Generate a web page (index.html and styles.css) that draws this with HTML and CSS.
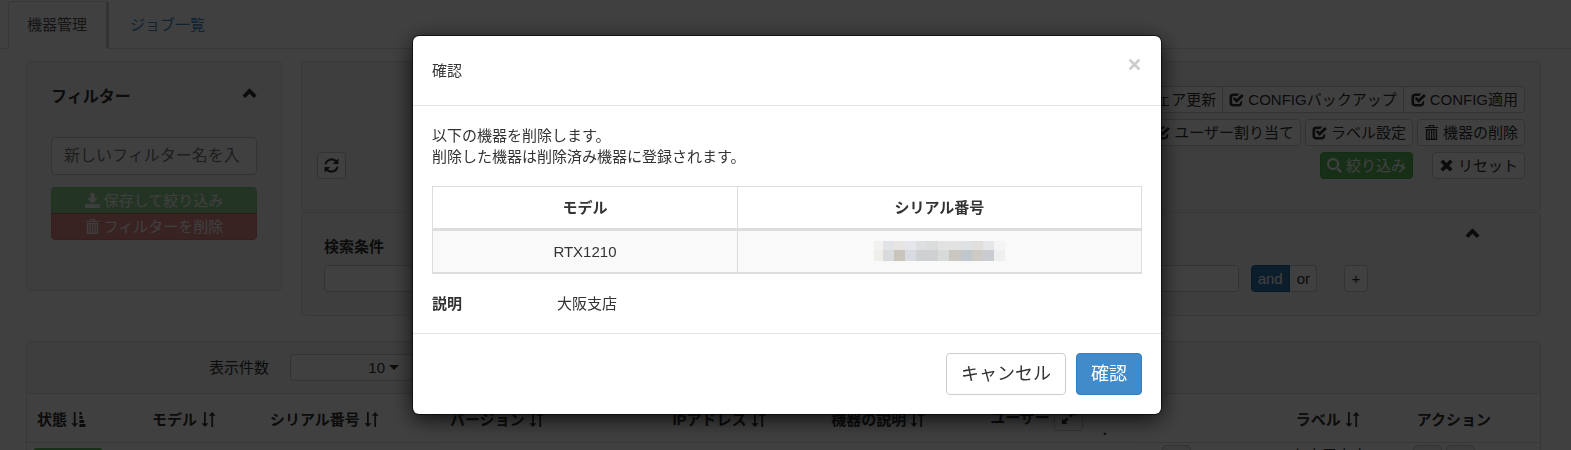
FILE: index.html
```html
<!DOCTYPE html>
<html lang="ja">
<head>
  <meta charset="UTF-8">
  <meta name="viewport" content="width=device-width, initial-scale=1.0">
  <title>機器管理</title>
  <link rel="stylesheet" href="styles.css">
</head>
<body>
  <svg class="sprite" aria-hidden="true">
    <symbol id="up" viewBox="0 0 16 16"><path d="M8 2.5 15.5 10 12.6 12.9 8 8.3 3.4 12.9.5 10z"/></symbol>
    <symbol id="check" viewBox="0 0 16 16"><path d="M11 1.500H4.500A4 4 0 0 0 .5 5.500v6A4 4 0 0 0 4.500 15.500H10a4 4 0 0 0 4-4V9l-2.300 2.200a1.500 1.500 0 0 1-1.500 1.700H5a1.700 1.700 0 0 1-1.700-1.700V6A1.700 1.700 0 0 1 5 4.300h4z"/><path d="M4 7.200 6 5.300l2.100 2.100L13.700 2l2.200 2.200-7.800 7.400z"/></symbol>
    <symbol id="save" viewBox="0 0 16 16"><path d="M6 0h4v5h4L8 11.500 2 5h4zM0 12h16v4H0zM12.500 13.300v1h2v-1z" fill-rule="evenodd"/></symbol>
    <symbol id="trash" viewBox="0 0 16 16"><path d="M5 2V0h6v2h4v1.200H1V2zM6.200 1.100V2h3.600v-.9zM2 4.200h12V16H2zM3.600 5.400v9.200h1.200V5.400zM6.200 5.400v9.200h1.200V5.400zM8.800 5.400v9.200H10V5.400zM11.300 5.400v9.200h1.200V5.400z" fill-rule="evenodd"/></symbol>
    <symbol id="refresh" viewBox="0 0 16 16"><path d="M.6 7A7.500 7.500 0 0 1 13.300 2.500L15.400.4V6.500H9.300L11.700 4.100A5.600 5.600 0 0 0 2.500 7zM15.400 9A7.500 7.500 0 0 1 2.700 13.500L.6 15.600V9.500H6.700L4.300 11.900A5.600 5.600 0 0 0 13.500 9z"/></symbol>
    <symbol id="search" viewBox="0 0 16 16"><path d="M6.500 0a6.500 6.500 0 1 1-3.700 11.800A6.500 6.500 0 0 1 6.500 0zm0 2.300a4.200 4.200 0 1 0 0 8.400 4.200 4.200 0 0 0 0-8.400zM9.500 11.500l2-2L16 14l-2 2z" fill-rule="evenodd"/></symbol>
    <symbol id="remove" viewBox="0 0 16 16"><path d="M4.300 1.500 8 5.200l3.700-3.700 2.800 2.800L10.800 8l3.700 3.700-2.800 2.800L8 10.800l-3.700 3.700-2.800-2.800L5.200 8 1.500 4.300z"/></symbol>
    <symbol id="close" viewBox="0 0 16 16"><path d="M3.800 1.800 8 6l4.200-4.200 2 2L10 8l4.200 4.200-2 2L8 10l-4.200 4.200-2-2L6 8 1.800 3.800z"/></symbol>
    <symbol id="sort" viewBox="0 0 16 16"><path d="M3.200 0h1.900v12H8L4.200 16 .5 12h2.700zM11 16h1.900V4h2.700L12 0 8.200 4H11z"/></symbol>
    <symbol id="sorted" viewBox="0 0 16 16"><path d="M3 0h1.900v12h2.700L4 16 .3 12H3zM9 0h2.500v3H9zM9 4.300h3.500v3H9zM9 8.600h5v3H9zM9 12.900h6.500v3H9z"/></symbol>
    <symbol id="expand" viewBox="0 0 16 16"><path d="M9 1h6v6l-2-2-3 3-2-2 3-3zM1 9l2 2 3-3 2 2-3 3 2 2H1z"/></symbol>
  </svg>

  <ul class="nav-tabs">
    <li class="active"><a href="#devices">機器管理</a></li>
    <li><a href="#jobs">ジョブ一覧</a></li>
  </ul>

  <main class="page">
    <div class="top">
      <section class="well filter">
        <h2 class="well-title">フィルター<svg class="icon"><use href="#up"/></svg></h2>
        <input class="filter-name" type="text" aria-label="フィルター名" placeholder="新しいフィルター名を入">
        <div class="filter-buttons">
          <button class="btn btn-success" disabled><svg class="icon"><use href="#save"/></svg>保存して絞り込み</button>
          <button class="btn btn-danger" disabled><svg class="icon"><use href="#trash"/></svg>フィルターを削除</button>
        </div>
      </section>

      <div class="right">
        <section class="well tools">
          <button class="btn" aria-label="更新"><svg class="icon"><use href="#refresh"/></svg></button>
          <div class="tool-rows">
            <div class="btn-group">
              <button class="btn"><svg class="icon"><use href="#check"/></svg>ファームウェア更新</button>
              <button class="btn"><svg class="icon"><use href="#check"/></svg>CONFIGバックアップ</button>
              <button class="btn"><svg class="icon"><use href="#check"/></svg>CONFIG適用</button>
            </div>
            <div class="tool-row">
              <button class="btn"><svg class="icon"><use href="#check"/></svg>ユーザー割り当て</button>
              <button class="btn"><svg class="icon"><use href="#check"/></svg>ラベル設定</button>
              <button class="btn"><svg class="icon"><use href="#trash"/></svg>機器の削除</button>
            </div>
            <div class="tool-row wide">
              <button class="btn btn-success"><svg class="icon"><use href="#search"/></svg>絞り込み</button>
              <button class="btn"><svg class="icon"><use href="#remove"/></svg>リセット</button>
            </div>
          </div>
        </section>

        <section class="well search">
          <div class="search-head">
            <label for="condition">検索条件</label>
            <svg class="icon"><use href="#up"/></svg>
          </div>
          <div class="search-row">
            <input id="condition" type="text">
            <div class="btn-group">
              <button class="btn btn-active">and</button>
              <button class="btn">or</button>
            </div>
            <button class="btn btn-plus">+</button>
          </div>
        </section>
      </div>
    </div>

    <section class="list">
      <div class="list-head">
        <label for="count">表示件数</label>
        <select id="count"><option>10</option><option>20</option><option>50</option></select>
      </div>
      <table class="devices">
        <colgroup>
          <col class="c-state"><col class="c-model"><col class="c-serial"><col class="c-version"><col class="c-ip">
          <col class="c-desc"><col class="c-user"><col class="c-more"><col class="c-label"><col>
        </colgroup>
        <thead>
          <tr>
            <th>状態<svg class="icon"><use href="#sorted"/></svg></th>
            <th>モデル<svg class="icon"><use href="#sort"/></svg></th>
            <th>シリアル番号<svg class="icon"><use href="#sort"/></svg></th>
            <th>バージョン<svg class="icon"><use href="#sort"/></svg></th>
            <th>IPアドレス<svg class="icon"><use href="#sort"/></svg></th>
            <th>機器の説明<svg class="icon"><use href="#sort"/></svg></th>
            <th class="user"><div class="user-head">ユーザー<button class="btn" aria-label="展開"><svg class="icon"><use href="#expand"/></svg></button><span class="dot">.</span></div></th>
            <th></th>
            <th>ラベル<svg class="icon"><use href="#sort"/></svg></th>
            <th>アクション</th>
          </tr>
        </thead>
        <tbody>
          <tr>
            <td><span class="state"></span></td>
            <td>NVR700W</td>
            <td>MMM004881</td>
            <td>Rev.15.00.14 (build 9)</td>
            <td>110.240.78.98</td>
            <td>instance05</td>
            <td></td>
            <td><button class="btn" aria-label="ユーザー追加"><svg class="icon"><use href="#expand"/></svg></button></td>
            <td>名古屋支店</td>
            <td><button class="btn" aria-label="検索"><svg class="icon"><use href="#search"/></svg></button> <button class="btn" aria-label="削除"><svg class="icon"><use href="#trash"/></svg></button></td>
          </tr>
        </tbody>
      </table>
    </section>
  </main>

  <div class="backdrop">
    <div class="modal" role="dialog" aria-modal="true" aria-labelledby="modal-title">
      <div class="modal-header">
        <h4 id="modal-title">確認</h4>
        <button class="close" aria-label="閉じる"><svg class="icon"><use href="#close"/></svg></button>
      </div>
      <div class="modal-body">
        <p>以下の機器を削除します。<br>削除した機器は削除済み機器に登録されます。</p>
        <table class="targets">
          <thead>
            <tr><th class="target-model">モデル</th><th>シリアル番号</th></tr>
          </thead>
          <tbody>
            <tr>
              <td>RTX1210</td>
              <td>
                <svg class="mosaic" viewBox="0 0 131 20" shape-rendering="crispEdges" role="img" aria-label="シリアル番号（非表示）">
                  <path fill="#f2f2f1" d="M0 0h9v9H0z"/><path fill="#e2e3e6" d="M9 0h11v9H9z"/><path fill="#e8e4e2" d="M20 0h11v9H20z"/><path fill="#e4e6eb" d="M31 0h11v9H31z"/><path fill="#dedfe0" d="M42 0h11v9H42z"/><path fill="#dbdcdc" d="M53 0h11v9H53z"/><path fill="#e2e2e2" d="M64 0h23v9H64z"/><path fill="#dfe2e4" d="M87 0h11v9H87z"/><path fill="#e2dedc" d="M98 0h11v9H98z"/><path fill="#e4e6e8" d="M109 0h11v9H109z"/><path fill="#f4f4f4" d="M120 0h11v9H120z"/>
                  <path fill="#f0eeeb" d="M0 9h9v11H0z"/><path fill="#d8dade" d="M9 9h11v11H9z"/><path fill="#c9c4bc" d="M20 9h11v11H20z"/><path fill="#d7dbe1" d="M31 9h11v11H31z"/><path fill="#ced0d1" d="M42 9h22v11H42z"/><path fill="#d7dad9" d="M64 9h11v11H64z"/><path fill="#cac6c1" d="M75 9h12v11H75z"/><path fill="#c0c7cd" d="M87 9h11v11H87z"/><path fill="#cdc9c4" d="M98 9h11v11H98z"/><path fill="#c9cdd1" d="M109 9h11v11H109z"/><path fill="#edf0ef" d="M120 9h11v11H120z"/>
                </svg>
              </td>
            </tr>
          </tbody>
        </table>
        <dl>
          <dt>説明</dt>
          <dd>大阪支店</dd>
        </dl>
      </div>
      <div class="modal-footer">
        <button class="btn btn-lg">キャンセル</button>
        <button class="btn btn-lg btn-primary">確認</button>
      </div>
    </div>
  </div>
</body>
</html>
```

FILE: styles.css
```css
* {
  box-sizing: border-box;
}
html {
  height: 100%;
  overflow: hidden;
}
body {
  margin: 0;
  font-family: "Liberation Sans", "Noto Sans CJK JP", sans-serif;
  font-size: 15px;
  line-height: 21px;
  color: #333;
  background: #fff;
}
h2, h4, p, dl, dd, ul {
  margin: 0;
  padding: 0;
}
input, button, select {
  font: inherit;
  color: inherit;
}
input, select {
  border: 1px solid #ccc;
  border-radius: 4px;
  background: #fff;
}
a {
  color: #428bca;
  text-decoration: none;
}
.sprite {
  position: absolute;
  width: 0;
  height: 0;
}
.icon {
  width: 15px;
  height: 15px;
  fill: currentColor;
  flex: none;
}

/* buttons */
.btn {
  display: inline-flex;
  align-items: center;
  justify-content: center;
  gap: 4px;
  min-height: 27px;
  padding: 2px 6px;
  border: 1px solid #ccc;
  border-radius: 4px;
  background: #fff;
  white-space: nowrap;
}
.btn-success {
  color: #fff;
  background: #5cb85c;
  border-color: #4cae4c;
}
.btn-danger {
  color: #fff;
  background: #d9534f;
  border-color: #d43f3a;
}
.btn-active {
  color: #fff;
  background: #3276b1;
  border-color: #285e8e;
}
.btn-plus {
  min-width: 24px;
}
.btn:disabled {
  opacity: 0.65;
}
.btn-group {
  display: flex;
}
.btn-group .btn {
  border-radius: 0;
}
.btn-group .btn + .btn {
  border-left: 0;
}
.btn-group .btn:first-child {
  border-radius: 4px 0 0 4px;
}
.btn-group .btn:last-child {
  padding-left: 7px;
  border-radius: 0 4px 4px 0;
}
.btn-lg {
  padding: 8px 14px;
  font-size: 18px;
  line-height: 24px;
}
.btn-primary {
  color: #fff;
  background: #428bca;
  border-color: #357ebd;
}

/* tabs */
.nav-tabs {
  display: flex;
  gap: 2px;
  list-style: none;
  padding: 1px 0 0 8px;
  border-bottom: 1px solid #ddd;
}
.nav-tabs a {
  display: block;
  padding: 13px 19px;
}
.nav-tabs .active {
  margin-bottom: -1px;
  border: 1px solid #ddd;
  border-right: 3px solid #ccc;
  border-bottom-color: #fff;
  border-radius: 4px 4px 0 0;
}
.nav-tabs .active a {
  padding: 12px 19px 13px 18px;
  color: #555;
}

/* panels */
.page {
  padding: 12px 30px 0 26px;
}
.top {
  display: grid;
  grid-template-columns: 256px 1fr;
  gap: 19px;
  align-items: start;
}
.well {
  background: #f5f5f5;
  border: 1px solid #e3e3e3;
  border-radius: 4px;
}
.filter {
  padding: 24px 24px 50px;
}
.well-title {
  display: flex;
  justify-content: space-between;
  margin-bottom: 30px;
  font-size: 16px;
  line-height: 21px;
}
.filter-name {
  width: 100%;
  height: 38px;
  margin-bottom: 12px;
  padding: 0 12px;
  font-size: 16px;
}
.filter-name::placeholder {
  color: #777;
}
.filter-buttons {
  display: flex;
  flex-direction: column;
}
.filter-buttons .btn:first-child {
  border-radius: 4px 4px 0 0;
}
.filter-buttons .btn:last-child {
  margin-top: -1px;
  border-radius: 0 0 4px 4px;
}
.right {
  display: grid;
  gap: 1px;
}
.tools {
  display: flex;
  justify-content: space-between;
  align-items: flex-end;
  padding: 24px 15px 31px;
}
.tool-rows {
  display: flex;
  flex-direction: column;
  align-items: flex-end;
  gap: 6px;
}
.tool-row {
  display: flex;
  gap: 4px;
}
.tool-row.wide {
  gap: 19px;
}
.search {
  padding: 13px 172px 23px 22px;
}
.search-head {
  display: flex;
  justify-content: space-between;
  margin: 0 -112px 8px 0;
}
.search-head label {
  padding-top: 10px;
  font-weight: bold;
}
.search-row {
  display: flex;
}
.search-row input {
  flex: 1;
  height: 27px;
  margin-right: 12px;
}
.search-row .btn-plus {
  margin-left: 27px;
}

/* device list */
.list {
  margin-top: 25px;
  border: 1px solid #ddd;
  border-radius: 4px;
}
.list-head {
  display: flex;
  align-items: center;
  gap: 21px;
  padding: 12px 0 12px 182px;
  background: #f5f5f5;
  border-bottom: 1px solid #ddd;
}
.list-head select {
  width: 124px;
  height: 27px;
  padding: 0 28px 0 6px;
  appearance: none;
  text-align-last: right;
  background: #fff url("data:image/svg+xml,%3Csvg xmlns='http://www.w3.org/2000/svg' width='10' height='5'%3E%3Cpath d='M0 0h10L5 5z' fill='%23333'/%3E%3C/svg%3E") no-repeat right 14px center;
}
.devices {
  width: 100%;
  table-layout: fixed;
  border-collapse: collapse;
}
.c-state { width: 7.6%; }
.c-model { width: 7.8%; }
.c-serial { width: 11.9%; }
.c-version { width: 14.7%; }
.c-ip { width: 10.5%; }
.c-desc { width: 10.5%; }
.c-user { width: 11.6%; }
.c-more { width: 8.6%; }
.c-label { width: 8%; }
.devices th {
  height: 48px;
  padding: 4px 0 0 10px;
  text-align: left;
  white-space: nowrap;
  border-bottom: 1px solid #ddd;
}
.devices th .icon {
  margin-left: 4px;
  vertical-align: -2px;
}
.devices td {
  padding: 2px 6px;
  vertical-align: top;
  white-space: nowrap;
}
.devices td .btn {
  background: #eee;
}
.devices .user {
  padding: 0 0 0 10px;
}
.user-head {
  display: flex;
  align-items: center;
}
.user-head .btn {
  margin-left: 4px;
}
.user-head .btn .icon {
  margin: 0;
}
.user-head .dot {
  margin: 24px 0 0 20px;
}
.state {
  display: block;
  width: 70px;
  height: 21px;
  margin-top: 3px;
  background: #5cb85c;
  border-radius: 4px;
}

/* dialog */
.backdrop {
  position: fixed;
  inset: 0;
  padding: 36px 0 0 3px;
  background: rgba(0, 0, 0, 0.75);
}
.modal {
  max-width: 748px;
  margin: 0 auto;
  background: #fff;
  border-radius: 6px;
  box-shadow: 0 0 0 1px rgba(0, 0, 0, 0.6), 0 5px 22px rgba(0, 0, 0, 0.8);
}
.modal-header {
  display: flex;
  justify-content: space-between;
  padding: 24px 19px;
  border-bottom: 1px solid #e5e5e5;
}
.modal-header h4 {
  font-size: 15px;
  font-weight: normal;
}
.close {
  display: flex;
  align-self: flex-start;
  margin-top: -3px;
  padding: 0;
  border: 0;
  background: none;
  color: #ccc;
}
.modal-body {
  padding: 19px;
}
.targets {
  width: 100%;
  margin: 19px 0;
  border-collapse: collapse;
  text-align: center;
}
.targets th, .targets td {
  height: 43px;
  padding: 0;
  border: 1px solid #ddd;
}
.targets th {
  border-bottom-width: 3px;
}
.targets td {
  background: #f9f9f9;
  border-bottom-width: 2px;
}
.target-model {
  width: 43%;
}
.mosaic {
  display: block;
  width: 131px;
  height: 20px;
  margin: 0 auto;
}
.modal-body dl {
  display: grid;
  grid-template-columns: 125px 1fr;
}
.modal-body dt {
  font-weight: bold;
}
.modal-footer {
  display: flex;
  justify-content: flex-end;
  gap: 10px;
  padding: 19px;
  border-top: 1px solid #e5e5e5;
}
```
